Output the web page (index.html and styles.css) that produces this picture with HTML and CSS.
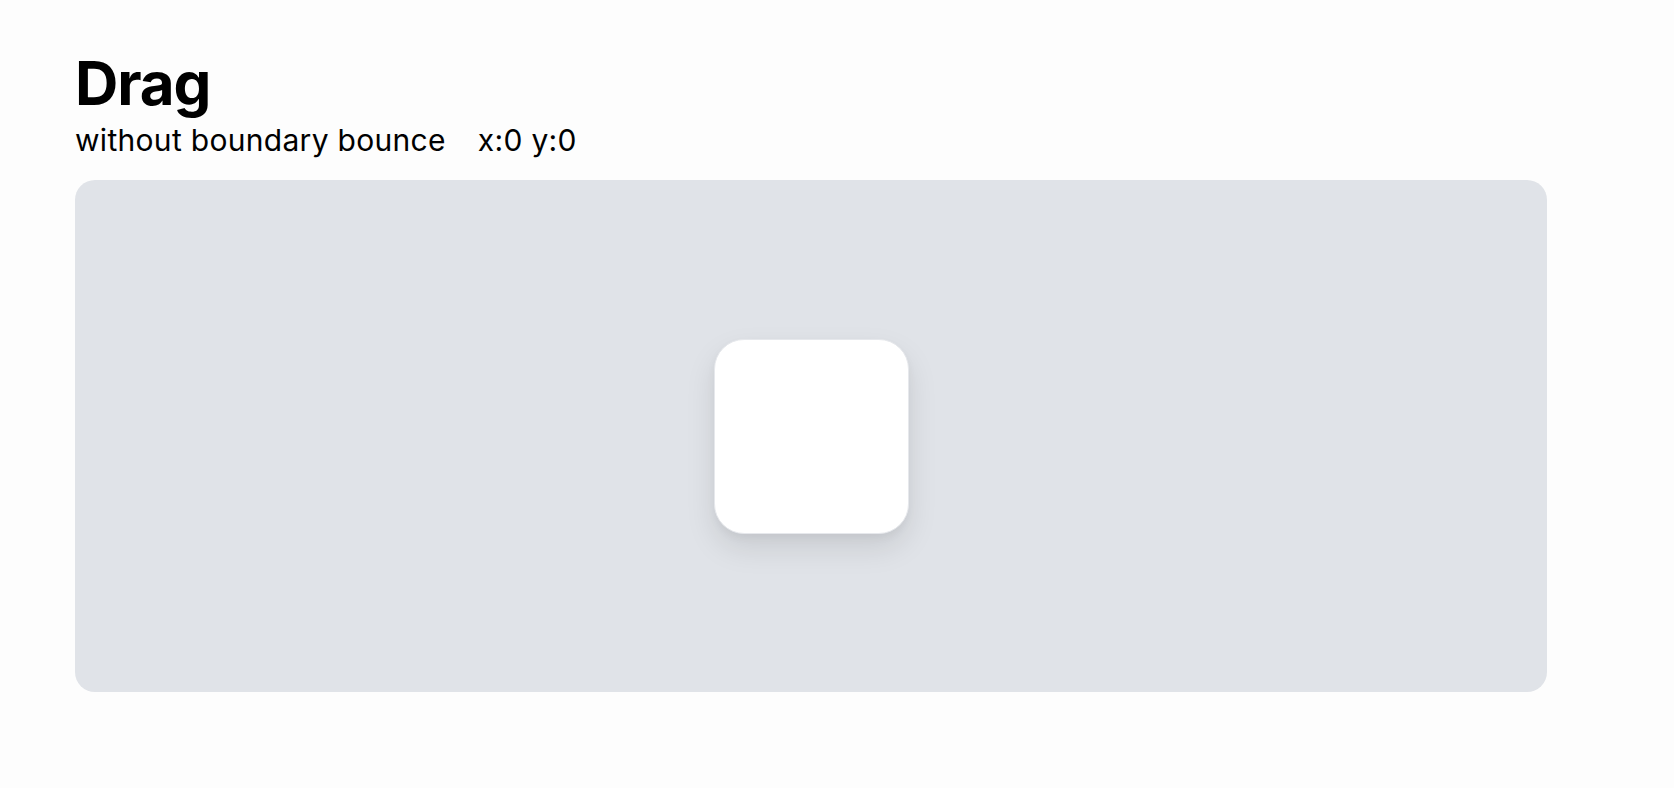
FILE: index.html
```html
<!DOCTYPE html>
<html>
<head>
<meta charset="utf-8">
<link rel="stylesheet" href="styles.css">
</head>
<body>
<main class="page">
  <h1 class="title">Drag</h1>
  <p class="subtitle"><span>without boundary bounce</span><span class="coords">x:0 y:0</span></p>
  <section class="stage">
    <div class="card"></div>
  </section>
</main>
</body>
</html>
```
FILE: styles.css
```css
html, body {
  margin: 0;
  padding: 0;
  background: #fdfdfd;
  font-family: Inter, "Noto Sans", sans-serif;
  color: #000;
}
.page {
  padding: 45px 0 0 75px;
  width: 1472px;
}
.title {
  margin: 0;
  font-size: 60px;
  font-weight: 700;
  line-height: 76px;
  letter-spacing: -1.1px;
}
.subtitle {
  margin: 0;
  font-size: 30px;
  line-height: 38px;
  letter-spacing: 0.3px;
  display: flex;
  gap: 32px;
}
.stage {
  margin-top: 21px;
  height: 512px;
  background: #e0e3e8;
  border-radius: 20px;
  display: flex;
  align-items: center;
  justify-content: center;
}
.card {
  width: 193px;
  height: 193px;
  background: #fff;
  border: 1px solid #e6e8ec;
  border-radius: 30px;
  box-shadow: 0 14px 30px rgba(0, 0, 0, 0.10), 0 4px 8px rgba(0, 0, 0, 0.04);
}
```
